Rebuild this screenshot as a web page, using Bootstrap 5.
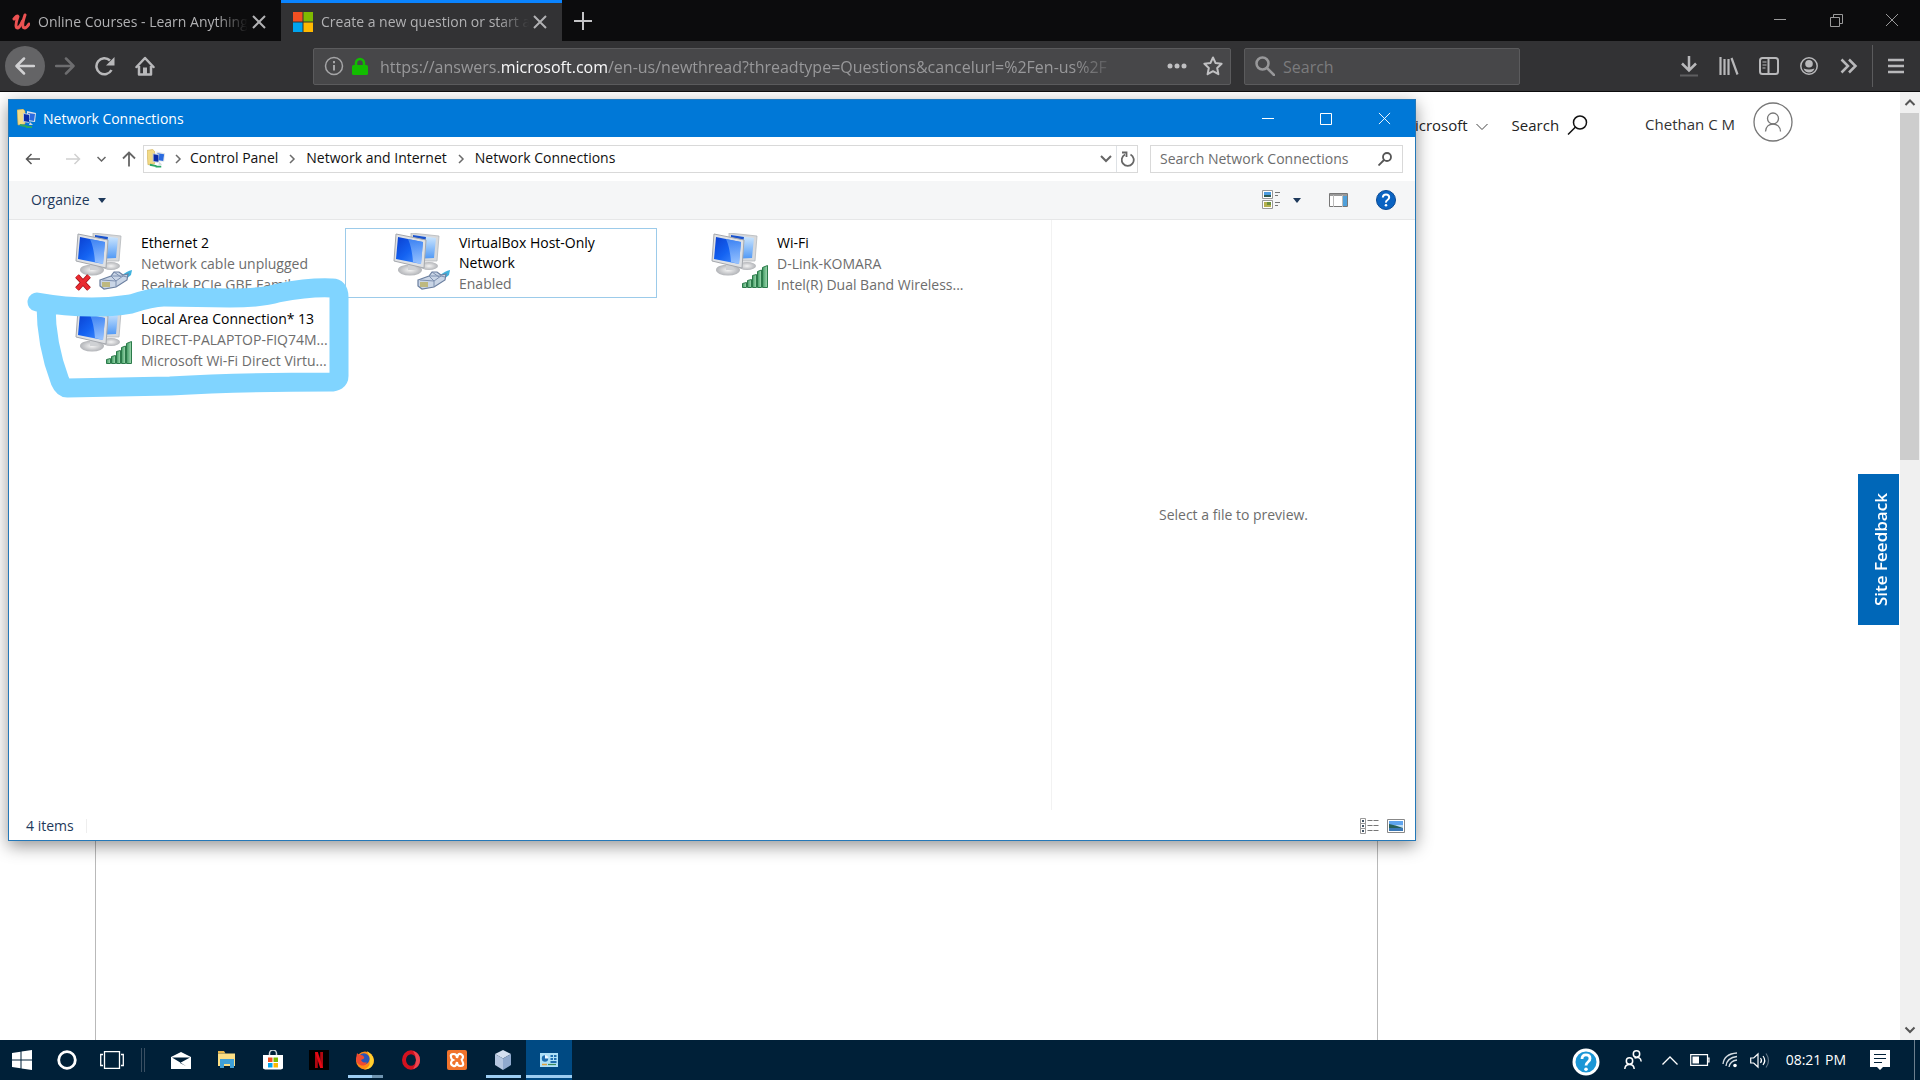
<!DOCTYPE html>
<html lang="en">
<head>
<meta charset="utf-8">
<meta name="viewport" content="width=device-width, initial-scale=1">
<title>Network Connections</title>
<link href="https://cdn.jsdelivr.net/npm/bootstrap@5.3.0/dist/css/bootstrap.min.css" rel="stylesheet">
<style>
:root { --ui: "Open Sans", "Noto Sans", sans-serif; }
body { font-family: var(--ui); font-size: 14px; line-height: 20px; color: #000; height: 100vh; overflow: hidden; background: #fff; }
svg { display: block; flex: none; }
button, .plain { border: 0; background: none; padding: 0; color: inherit; display: flex; align-items: center; justify-content: center; text-decoration: none; flex: none; }
input { font-family: var(--ui); }

/* browser chrome */
.tabstrip { height: 41px; background: #0c0c0d; color: #b1b1b3; }
.tab-item { width: 281px; padding: 2px 15px 0 12px; font-size: 14px; }
.tab-item.current { background: #323234; border-top: 3px solid #0a84ff; padding-top: 0; padding-bottom: 1px; }
.tab-title { overflow: hidden; white-space: nowrap; -webkit-mask-image: linear-gradient(90deg, #000 85%, transparent); mask-image: linear-gradient(90deg, #000 85%, transparent); }
.win-btn { width: 56px; height: 40px; color: #9a9a9a; }
.toolbar { height: 51px; background: #323234; border-bottom: 1px solid #0c0c0d; color: #b8b8ba; padding-left: 5px; }
.tool { width: 40px; height: 40px; }
.tool.back { background: #646466; border-radius: 50%; color: #d0d0d2; }
.tool.off { color: #6d6d6f; }
.field { height: 37px; background: #474749; border: 1px solid #5b5b5d; border-radius: 2px; }
.url-field { flex: 0 1 918px; margin-left: 148px; padding: 0 7px 0 10px; }
.url-text { font-size: 16px; color: #98989a; white-space: nowrap; overflow: hidden; width: 750px; outline: 0; padding-top: 2px; -webkit-mask-image: linear-gradient(90deg, #000 93%, transparent 99%); mask-image: linear-gradient(90deg, #000 93%, transparent 99%); }
.url-text b { font-weight: 400; color: #f9f9fa; }
.find-field { flex: 0 1 276px; margin-left: 13px; padding: 0 10px; }
.find-field input { background: none; border: 0; outline: 0; font-size: 16px; min-width: 0; color: #ddd; padding: 2px 0 0; }
.find-field input::placeholder { color: #7b7b7d; opacity: 1; }
.menu-sep { width: 1px; height: 42px; background: #5b5b5d; margin: 0 3px; }

/* web page */
.site { background: #fff; overflow: hidden; padding-top: 66px; }
.site-col { margin: 0 542px 0 95px; border: 1px solid #b9b9b9; border-width: 0 1px; height: 100%; }
.site-head { top: 0; right: 127px; height: 66px; color: #222; font-size: 15px; }
.site-head .who { color: #333; padding-bottom: 2px; margin-left: 57px; }
.avatar { margin: 0 0 6px 18px; }
.feedback { right: 21px; top: 382px; width: 41px; height: 151px; padding-right: 4px; background: #0067b8; color: #fff; font-size: 17px; font-weight: 600; writing-mode: vertical-rl; transform: rotate(180deg); }
.scroller { right: 0; top: 0; bottom: 0; width: 20px; background: #f0f0f0; }
.scroller .thumb { height: 347px; background: #cdcdcd; margin-right: 1px; }

/* explorer window */
.explorer { left: 8px; top: 7px; width: calc(75% - 32px); height: 742px; z-index: 2; background: #fff; border: 1px solid #2478b8; box-shadow: 0 5px 16px rgba(0,0,0,.42); }
.titlebar { height: 37px; background: #0078d7; color: #fff; padding: 0 2px 0 8px; }
.titlebar button { width: 58px; height: 36px; }
.titlebar .caption { margin-left: 6px; }
.address { height: 44px; padding: 0 12px; color: #666; }
.box { height: 28px; border: 1px solid #d9d9d9; background: #fff; }
.crumbs { margin-left: 7px; padding-left: 3px; }
.crumbs a { color: #111; text-decoration: none; padding-bottom: 2px; }
.lookup { width: 253px; margin-left: 12px; padding: 0 10px 0 9px; }
.lookup input { border: 0; outline: 0; min-width: 0; padding: 0; color: #444; }
.lookup input::placeholder { color: #6d6d6d; opacity: 1; }
.cmdbar { height: 39px; background: #f5f6f7; border-bottom: 1px solid #e6e7e8; color: #1e395b; padding: 0 19px 0 22px; }
.items { display: grid; grid-template-columns: repeat(3, 312px); grid-auto-rows: 70px; gap: 6px; padding: 8px 0 0 18px; align-content: start; }
.conn { border: 1px solid transparent; padding: 4px 0 0 47px; color: #6d6d6d; line-height: 21px; text-align: left; align-items: flex-start; justify-content: flex-start; }
.conn.focused { border-color: #9ccbea; }
.conn .txt { width: 190px; margin: -1px 0 0 8px; display: block; }
.conn .txt span { display: block; white-space: nowrap; }
.conn .txt .nm { color: #000; }
.conn .txt .wrapped { white-space: normal; line-height: 20px; padding-top: 1px; }
.preview { width: 364px; border-left: 1px solid #f2f2f2; color: #6d6d6d; }
.status { height: 30px; padding: 2px 10px 0 17px; color: #1e395b; }
.status .bar { width: 1px; height: 14px; background: #eee; margin-left: 12px; }
.marker { left: 26px; top: 186px; z-index: 3; pointer-events: none; }

/* taskbar */
.taskbar { height: 40px; background: #002038; color: #fff; }
.task { width: 46px; height: 40px; position: relative; }
.task.sys { width: 45px; }
.task.sys:first-child { width: 44px; }
.task.open::after { content: ""; position: absolute; left: 6px; right: 5px; bottom: 2px; height: 3px; background: #9ccdf2; }
.task.multi::after { background: linear-gradient(90deg, #9ccdf2 24px, #6f94b0 24px); }
.task.active { background: #004a83; }
.task.active::after { left: 0; right: 0; }
.split { width: 4px; height: 24px; border: 1px solid #3a4f62; border-width: 0 1px; margin: 0 13px 0 7px; }
.peek { width: 6px; height: 40px; border-left: 1px solid #6c7f8e; }
</style>
<script src="https://cdn.jsdelivr.net/npm/bootstrap@5.3.0/dist/js/bootstrap.bundle.min.js"></script>
</head>
<body class="d-flex flex-column">

<svg width="0" height="0" class="position-absolute" aria-hidden="true">
  <defs>
    <linearGradient id="scr" x1="0" y1="0" x2="1" y2="1"><stop offset="0" stop-color="#0a3fd0"/><stop offset=".5" stop-color="#1463f2"/><stop offset="1" stop-color="#4d95ff"/></linearGradient>
    <linearGradient id="glare" x1="0" y1="0" x2="0" y2="1"><stop offset="0" stop-color="#4f92f6"/><stop offset="1" stop-color="#b4d5ff"/></linearGradient>
    <linearGradient id="scr2" x1="0" y1="0" x2="0" y2="1"><stop offset="0" stop-color="#d4ebff"/><stop offset="1" stop-color="#4f98f5"/></linearGradient>
    <linearGradient id="bars" x1="0" y1="0" x2="1" y2="0"><stop offset="0" stop-color="#3f9a62"/><stop offset="1" stop-color="#a4dcb4"/></linearGradient>
    <radialGradient id="base"><stop offset="0" stop-color="#f4f4f4"/><stop offset="1" stop-color="#b2b4b8"/></radialGradient>
    <symbol id="pcs" viewBox="0 0 50 44">
      <ellipse cx="36" cy="33" rx="9" ry="4" fill="url(#base)"/>
      <path d="M18 0 46 3 44 28 18 28z" fill="#d7d9dc" stroke="#b4b7bb" stroke-width=".8"/>
      <path d="M20 2 43 5 41 25 20 26z" fill="url(#scr2)"/>
      <path d="M20 2 33 4 32 10 20 9z" fill="#1a52cc"/>
      <ellipse cx="17" cy="37" rx="12" ry="5.500" fill="url(#base)"/>
      <path d="M15 29h7l1 8h-8z" fill="#cfd1d4"/>
      <path d="M3 1 33 7 31 35 1 28z" fill="#dfe1e4" stroke="#a5a8ad"/>
      <path d="M5 4 30 9 28 31 3 26z" fill="url(#scr)"/>
      <path d="M15 6 30 9 28 31 20 29Q19 15 15 6z" fill="url(#glare)" opacity=".75"/>
    </symbol>
    <symbol id="plug" viewBox="0 0 34 21">
      <path d="M22 7Q28 2 33 1L32 6 27 10z" fill="#3fb2de"/>
      <path d="M1 11 12 7 15 3 20 3 24 6 29 5 28 11 17 18 5 20 1 17z" fill="#c9d5e6" stroke="#6b7f9f" stroke-width="1.200"/>
      <path d="M12 7 24 7 28 8M12 7 17 12 17 18M3 11 17 12 24 7M15 3 22 8" fill="none" stroke="#7d90b0"/>
      <path d="M4 13v5M6 13v5M8 13v5M10 13v5" stroke="#b6a63c" stroke-width="1.200"/>
    </symbol>
    <symbol id="signal" viewBox="0 0 26 23">
      <g fill="url(#bars)" stroke="#2b7a4a" stroke-width="1"><path d="M.5 22.500v-4l4-1v5z"/><path d="M5.500 22.500v-7l4-1v8z"/><path d="M10.500 22.500v-12l4-1v13z"/><path d="M15.500 22.500v-16l4-1.500v17.500z"/><path d="M20.500 22.500V2.500l5-2v22z"/></g>
    </symbol>
    <symbol id="netfolder" viewBox="0 0 20 20">
      <path d="M0 1 6 0 8 2 8 15 1 16z" fill="#f2da86" stroke="#c9a94a" stroke-width=".6"/>
      <path d="M10 2 19 4 18 13 10 12z" fill="#dfe3e8"/><path d="M11 4 18 5 17 12 11 11z" fill="#2b6be0"/>
      <path d="M6 4 13 5 12 14 6 13z" fill="#b8c6dc"/><path d="M7 5 12 6 12 13 7 12z" fill="#0c2ca8"/>
      <path d="M13 13l3 3h-4z" fill="#cfd6de"/>
      <path d="M3 16l7 1.500M9 18h6" stroke="#2aa564" stroke-width="2"/>
    </symbol>
    <symbol id="chev" viewBox="0 0 8 10"><path d="M2 1l4 4-4 4" fill="none" stroke="#6b6b6b" stroke-width="1.500"/></symbol>
    <symbol id="cross" viewBox="0 0 14 14"><path d="M1 1l12 12M13 1L1 13" fill="none" stroke="currentColor" stroke-width="inherit"/></symbol>
  </defs>
</svg>

<header>
  <div class="tabstrip d-flex">
    <div class="tab-item d-flex align-items-center">
      <svg width="18" height="18" viewBox="0 0 18 18" fill="none" stroke="#ec5252" stroke-linecap="round" stroke-linejoin="round"><path d="M2 6Q5 2 6 3.500Q3 12 4.500 14.500Q7 16.500 10.500 8" stroke-width="3"/><path d="M13 2Q9.500 12 11.500 14.500Q14 16 17 11" stroke-width="3"/></svg>
      <span class="tab-title flex-grow-1 ms-2">Online Courses - Learn Anything</span>
      <button aria-label="Close tab" class="ms-1"><svg width="14" height="14" stroke-width="2"><use href="#cross"/></svg></button>
    </div>
    <div class="tab-item current d-flex align-items-center">
      <svg width="20" height="20" viewBox="0 0 20 20"><path fill="#f25022" d="M0 0h9.500v9.500H0z"/><path fill="#7fba00" d="M10.500 0H20v9.500h-9.500z"/><path fill="#00a4ef" d="M0 10.500h9.500V20H0z"/><path fill="#ffb900" d="M10.500 10.500H20V20h-9.500z"/></svg>
      <span class="tab-title flex-grow-1 ms-2">Create a new question or start a</span>
      <button aria-label="Close tab" class="ms-1"><svg width="14" height="14" stroke-width="2"><use href="#cross"/></svg></button>
    </div>
    <button class="ms-2 px-1" aria-label="New tab"><svg width="18" height="18" viewBox="0 0 18 18" stroke="#c4c4c6" stroke-width="2"><path d="M9 0v18M0 9h18"/></svg></button>
    <div class="d-flex ms-auto">
      <button class="win-btn" aria-label="Minimize"><svg width="12" height="12" stroke="currentColor"><path d="M0 5.500h12"/></svg></button>
      <button class="win-btn" aria-label="Restore"><svg width="13" height="13" fill="none" stroke="currentColor"><path d="M.5 3.500h9v9h-9zM3.500 3.500v-3h9v9h-3"/></svg></button>
      <button class="win-btn" aria-label="Close"><svg width="14" height="14" stroke-width="1"><use href="#cross"/></svg></button>
    </div>
  </div>

  <nav class="toolbar d-flex align-items-center" aria-label="Browser toolbar">
    <button class="tool back" aria-label="Back"><svg width="20" height="20" viewBox="0 0 20 20" fill="none" stroke="currentColor" stroke-width="2.500" stroke-linecap="round" stroke-linejoin="round"><path d="M19 10H2M9 2.500 1.500 10 9 17.500"/></svg></button>
    <button class="tool off" aria-label="Forward"><svg width="20" height="20" viewBox="0 0 20 20" fill="none" stroke="currentColor" stroke-width="2.500" stroke-linecap="round" stroke-linejoin="round"><path d="M1 10h17M11 2.500 18.500 10 11 17.500"/></svg></button>
    <button class="tool" aria-label="Reload"><svg width="20" height="20" viewBox="0 0 20 20" fill="none" stroke="currentColor" stroke-width="2.500"><path d="M16.500 14A8 8 0 1 1 15 4.500"/><path d="M19.500 1v8.500H11z" fill="currentColor" stroke="none"/></svg></button>
    <button class="tool" aria-label="Home"><svg width="20" height="20" viewBox="0 0 20 20" fill="none" stroke="currentColor" stroke-width="2.500" stroke-linejoin="round" stroke-linecap="round"><path d="M1.500 11 10 2l8.500 9M4 10v8.500h12V10"/><path d="M10 18v-6.500" stroke-width="4" stroke-linecap="butt"/></svg></button>
    <div class="field url-field d-flex align-items-center">
      <svg width="20" height="20" viewBox="0 0 20 20" fill="none" stroke="#a5a5a7" stroke-width="1.500"><circle cx="10" cy="10" r="8.500"/><path d="M10 9v5.500M10 5v2.200" stroke-width="2"/></svg>
      <svg class="ms-2" width="16" height="18" viewBox="0 0 16 18"><path d="M4 9V6a4 4 0 0 1 8 0v3" fill="none" stroke="#12bc00" stroke-width="2.500"/><rect y="8" width="16" height="10" rx="1.500" fill="#12bc00"/></svg>
      <div class="url-text ms-2 ps-1" role="textbox" aria-label="Address" contenteditable="true" spellcheck="false">https://answers.<b>microsoft.com</b>/en-us/newthread?threadtype=Questions&amp;cancelurl=%2Fen-us%2F</div>
      <button class="ms-auto" aria-label="Page actions"><svg width="20" height="6" fill="#c0c0c2"><circle cx="3" cy="3" r="2.500"/><circle cx="10" cy="3" r="2.500"/><circle cx="17" cy="3" r="2.500"/></svg></button>
      <button class="ms-3" aria-label="Bookmark"><svg width="20" height="20" viewBox="0 0 20 20" fill="none" stroke="#c0c0c2" stroke-width="2" stroke-linejoin="round"><path d="M10 1.500l2.600 5.600 6 .7-4.400 4.200 1.200 6.200L10 15.200l-5.400 3L5.800 12 1.400 7.800l6-.7z"/></svg></button>
    </div>
    <div class="field find-field d-flex align-items-center">
      <svg width="20" height="20" viewBox="0 0 20 20" fill="none" stroke="#98989a" stroke-width="2.500" stroke-linecap="round"><circle cx="7.500" cy="7.500" r="6"/><path d="M12 12l7 7"/></svg>
      <input class="ms-2 flex-grow-1" type="text" aria-label="Search the web" placeholder="Search">
    </div>
    <div class="d-flex align-items-center ms-auto">
      <button class="tool" aria-label="Downloads"><svg width="18" height="22" viewBox="0 0 18 22" fill="none" stroke="currentColor" stroke-width="2.500"><path d="M9 1v14M2 8.500 9 15.500l7-7"/><path d="M0 20.500h18" stroke="#5e5e60" stroke-width="2"/></svg></button>
      <button class="tool" aria-label="Library"><svg width="20" height="18" viewBox="0 0 20 18" fill="none" stroke="currentColor" stroke-width="2.200"><path d="M1.500 0v18M5.500 2v16M9.500 2v16M12.500 1 18.500 17.500"/></svg></button>
      <button class="tool" aria-label="Sidebars"><svg width="20" height="18" viewBox="0 0 20 18" fill="none" stroke="currentColor" stroke-width="2"><rect x="1" y="1" width="18" height="16" rx="2.500"/><path d="M9.500 1v16"/><path d="M3.500 5h4M3.500 8h4M3.500 11h3" stroke-width="1.200"/></svg></button>
      <button class="tool" aria-label="Account"><svg width="18" height="18" viewBox="0 0 18 18"><circle cx="9" cy="9" r="8.200" fill="none" stroke="currentColor" stroke-width="1.500"/><circle cx="9" cy="6.800" r="3.800" fill="currentColor"/><path d="M3.500 11.500Q9 13.500 14.500 11.500 13 15.500 9 15.500T3.500 11.500z" fill="currentColor"/></svg></button>
      <button class="tool" aria-label="More tools"><svg width="18" height="16" viewBox="0 0 18 16" fill="none" stroke="currentColor" stroke-width="2.500"><path d="M1.500 1.500 8 8l-6.500 6.500M9 1.500 15.500 8 9 14.500"/></svg></button>
      <span class="menu-sep"></span>
      <button class="tool" aria-label="Menu"><svg width="16" height="16" stroke="currentColor" stroke-width="2.500"><path d="M0 2h16M0 8h16M0 14h16"/></svg></button>
      <span class="ps-1"></span>
    </div>
  </nav>
</header>

<main class="site flex-grow-1 position-relative">
  <div class="site-col"></div>

  <div class="site-head position-absolute d-flex align-items-center">
    <a href="#" class="plain">All Microsoft <svg class="ms-2 mt-1" width="12" height="8" fill="none" stroke="#444"><path d="M.5 1l5.500 5.500L11.500 1"/></svg></a>
    <a href="#" class="plain ps-2 ms-3">Search <svg class="ms-2" width="21" height="20" viewBox="0 0 21 20" fill="none" stroke="#111" stroke-width="1.500"><circle cx="13" cy="7.500" r="6.500"/><path d="M8.500 12 1 19.500"/></svg></a>
    <a href="#" class="plain who">Chethan C M</a>
    <a href="#" class="plain avatar" aria-label="Account"><svg width="40" height="40" viewBox="0 0 40 40" fill="none" stroke="#777" stroke-width="1.300"><circle cx="20" cy="20" r="19"/><circle cx="20" cy="16.500" r="5.500"/><path d="M12.500 29.500C12.500 19.500 27.500 19.500 27.500 29.500"/></svg></a>
  </div>

  <section class="explorer position-absolute d-flex flex-column" aria-label="Network Connections window">
    <div class="titlebar d-flex align-items-center">
      <svg width="20" height="20"><use href="#netfolder"/></svg>
      <span class="caption">Network Connections</span>
      <div class="d-flex ms-auto">
        <button aria-label="Minimize"><svg width="12" height="12" stroke="#fff"><path d="M0 5.500h12"/></svg></button>
        <button aria-label="Maximize"><svg width="12" height="12" fill="none" stroke="#fff"><path d="M.5.5h11v11H.5z"/></svg></button>
        <button aria-label="Close"><svg width="13" height="13" stroke-width="1"><use href="#cross"/></svg></button>
      </div>
    </div>

    <div class="address d-flex align-items-center">
      <button aria-label="Back" class="ms-1 me-1"><svg width="16" height="12" fill="none" stroke="#555" stroke-width="1.500"><path d="M15 6H1.500M6.500 1l-5 5 5 5"/></svg></button>
      <button aria-label="Forward" class="ms-3 me-3 ps-1"><svg width="16" height="12" fill="none" stroke="#d0d0d0" stroke-width="1.500"><path d="M1 6h13.500M9.500 1l5 5-5 5"/></svg></button>
      <button aria-label="Recent locations"><svg width="9" height="7" fill="none" stroke="#666" stroke-width="1.500"><path d="M.5 1l4 4 4-4"/></svg></button>
      <button aria-label="Up" class="ms-3"><svg width="14" height="16" fill="none" stroke="#666" stroke-width="1.800"><path d="M7 15.500V1.500M1 7.500l6-6 6 6"/></svg></button>
      <div class="box crumbs d-flex align-items-center flex-grow-1">
        <svg width="19" height="20"><use href="#netfolder"/></svg>
        <svg class="ms-2" width="8" height="10"><use href="#chev"/></svg>
        <a class="ms-2" href="#">Control Panel</a><svg class="ms-2 me-2" width="12" height="10"><use href="#chev"/></svg>
        <a href="#">Network and Internet</a><svg class="ms-2 me-2" width="12" height="10"><use href="#chev"/></svg>
        <a href="#">Network Connections</a>
        <button class="ms-auto me-1" aria-label="Previous locations"><svg width="12" height="8" fill="none" stroke="#666" stroke-width="2"><path d="M1 1l5 5 5-5"/></svg></button>
        <button class="h-100 border-start ps-1" aria-label="Refresh"><svg width="16" height="16" viewBox="0 0 16 16" fill="none" stroke="#666" stroke-width="1.800"><path d="M9.500 3.500A6 6 0 1 1 4 3.500"/><path d="M1 1.500h4.500V6"/></svg></button>
      </div>
      <div class="box lookup d-flex align-items-center">
        <input class="flex-grow-1" type="text" aria-label="Search Network Connections" placeholder="Search Network Connections">
        <svg width="14" height="14" viewBox="0 0 14 14" fill="none" stroke="#555" stroke-width="1.800"><circle cx="9" cy="5" r="4"/><path d="M6 8 .5 13.500"/></svg>
      </div>
    </div>

    <div class="cmdbar d-flex align-items-center">
      <button>Organize <svg class="ms-2" width="8" height="5" fill="#1e395b"><path d="M0 0h8L4 5z"/></svg></button>
      <div class="d-flex align-items-center ms-auto">
        <button aria-label="Change view"><svg width="19" height="20" viewBox="0 0 19 20" fill="none" stroke="#999"><path d="M.5.5h10v8H.5zM.5 10.500h10v8H.5z" fill="#fff"/><path fill="#4b9be0" stroke="none" d="M2 2h7v3H2z"/><path fill="#2d5a52" stroke="none" d="M2 5h7v2H2z"/><path fill="#b5b04e" stroke="none" d="M2 12h7v5H2z"/><path fill="#6b8f3c" stroke="none" d="M5 12h4v3H5z"/><path stroke="#777" d="M13 2.500h5M13 5.500h3M13 12.500h5M13 15.500h3"/></svg></button>
        <button class="ms-2 px-1" aria-label="View menu"><svg width="8" height="5" fill="#1e395b"><path d="M0 0h8L4 5z"/></svg></button>
        <button class="ms-4" aria-label="Preview pane"><svg width="19" height="14" viewBox="0 0 19 14"><path d="M.5.500h18v13H.5z" fill="#fff" stroke="#777"/><path d="M1 2h17" stroke="#999" stroke-width="2"/><path d="M4.500 2v12M13.500 2v12" stroke="#bbb"/><path fill="#4fa0da" d="M14 3h4v10h-4z"/></svg></button>
        <button class="ms-4 ps-1" aria-label="Help"><svg width="20" height="20" viewBox="0 0 20 20"><circle cx="10" cy="10" r="9.500" fill="#0a63c2" stroke="#0b4a94"/><path d="M6.800 7.500Q7 4.500 10 4.500T13.200 7.300Q13.200 9 11.500 10T10 12.700" fill="none" stroke="#fff" stroke-width="2"/><circle cx="10" cy="15.300" r="1.300" fill="#fff"/></svg></button>
      </div>
    </div>

    <div class="d-flex flex-grow-1">
      <div class="items flex-grow-1">
        <button class="conn">
          <svg width="58" height="58" viewBox="0 0 58 58"><use href="#pcs" width="50" height="44"/><use href="#plug" x="24" y="36" width="34" height="21"/><path d="M2 43l12 13M14 43 2 56" stroke="#a01218" stroke-width="5"/><path d="M2 43l12 13M14 43 2 56" stroke="#ea2a2f" stroke-width="3.500"/></svg>
          <span class="txt"><span class="nm">Ethernet 2</span><span>Network cable unplugged</span><span>Realtek PCIe GBE Family C...</span></span>
        </button>
        <button class="conn focused">
          <svg width="58" height="58" viewBox="0 0 58 58"><use href="#pcs" width="50" height="44"/><use href="#plug" x="24" y="36" width="34" height="21"/></svg>
          <span class="txt"><span class="nm wrapped">VirtualBox Host-Only Network</span><span>Enabled</span></span>
        </button>
        <button class="conn">
          <svg width="58" height="58" viewBox="0 0 58 58"><use href="#pcs" width="50" height="44"/><use href="#signal" x="31" y="32" width="26" height="23"/></svg>
          <span class="txt"><span class="nm">Wi-Fi</span><span>D-Link-KOMARA</span><span>Intel(R) Dual Band Wireless...</span></span>
        </button>
        <button class="conn">
          <svg width="58" height="58" viewBox="0 0 58 58"><use href="#pcs" width="50" height="44"/><use href="#signal" x="31" y="32" width="26" height="23"/></svg>
          <span class="txt"><span class="nm">Local Area Connection* 13</span><span>DIRECT-PALAPTOP-FIQ74M...</span><span>Microsoft Wi-Fi Direct Virtu...</span></span>
        </button>
      </div>
      <aside class="preview d-flex align-items-center justify-content-center">Select a file to preview.</aside>
    </div>

    <div class="status d-flex align-items-center">
      <span>4 items</span><span class="bar"></span>
      <div class="d-flex align-items-center ms-auto gap-2">
        <button aria-label="Details view"><svg width="19" height="16" viewBox="0 0 19 16" fill="none" stroke="#999"><path d="M.5.5h5v5h-5zM.5 5.500h5v5h-5zM.5 10.500h5v5h-5z" fill="#fff"/><path stroke="#456" stroke-width="2" d="M2 3h2M2 8h2M2 13h2"/><path stroke="#777" d="M7.500 2.500h5M13.500 2.500h5M7.500 7.500h5M13.500 7.500h5M7.500 12.500h5M13.500 12.500h5"/></svg></button>
        <button aria-label="Large icons view"><svg width="18" height="14" viewBox="0 0 18 14"><path d="M.5.5h17v13H.5z" fill="#fff" stroke="#888"/><path fill="#5fa4ee" d="M2 2h14v5H2z"/><path fill="#bcdcf5" d="M2 6h14v3H2z"/><path fill="#275f58" d="M2 5Q8 6 16 9H2z"/><path fill="#3b78b5" d="M2 9h14v3H2z"/></svg></button>
      </div>
    </div>
  </section>

  <svg class="marker position-absolute" width="326" height="124" viewBox="26 278 326 124" fill="none" aria-hidden="true">
    <path d="M37 302Q88 311 131 304Q152 297 164 297L230 298Q262 298 278 293Q310 287 331 288Q339 287 339 297V376Q339 382 330 382Q240 382 170 386L67 388Q63 388 60 381Q46 344 46 305" stroke="#80d4ff" stroke-width="19" stroke-linejoin="round" stroke-linecap="round"/>
  </svg>

  <a href="#" class="feedback plain position-absolute">Site Feedback</a>
  <div class="scroller position-absolute d-flex flex-column" aria-hidden="true">
    <svg class="my-1 mx-1" width="12" height="13" fill="none" stroke="#555" stroke-width="2"><path d="M1.500 9 6 4.500 10.500 9"/></svg>
    <div class="thumb"></div>
    <svg class="mt-auto mb-1 mx-1" width="12" height="12" fill="none" stroke="#555" stroke-width="2"><path d="M1.500 3.500 6 8l4.500-4.500"/></svg>
  </div>
</main>

<footer class="taskbar d-flex align-items-center">
  <button class="task sys" aria-label="Start"><svg width="20" height="20" viewBox="0 0 20 20" fill="#fff"><path d="M0 3 8.500 1.800V9.500H0zM9.500 1.600 20 0v9.500H9.500zM0 10.500h8.500v7.800L0 17zM9.500 10.500H20V20L9.500 18.400z"/></svg></button>
  <button class="task sys" aria-label="Cortana"><svg width="20" height="20" fill="none" stroke="#fff" stroke-width="2.800"><circle cx="10" cy="10" r="8.300"/></svg></button>
  <button class="task sys" aria-label="Task view"><svg width="24" height="18" viewBox="0 0 24 18" fill="none" stroke="#fff" stroke-width="1.300"><path d="M4.500.700h15v16.600h-15zM3 3.500H.7v11H3M21 3.500h2.300v11H21"/></svg></button>
  <span class="split"></span>
  <button class="task" aria-label="Mail"><svg width="20" height="17" viewBox="0 0 20 17"><path fill="#fff" d="M0 5 10 0l10 5v12H0z"/><path d="M1 5.500h18L9 11l6 3z" fill="#002038"/></svg></button>
  <button class="task" aria-label="File Explorer"><svg width="20" height="18" viewBox="0 0 20 18"><path fill="#e9b84c" d="M1 0h6l1.500 2.500H1z"/><path fill="#fbdf85" d="M1 2.500h17V15H1z"/><path fill="#3fa0d8" d="M3 8h14v9h-4v-4H7v4H3z"/></svg></button>
  <button class="task" aria-label="Store"><svg width="20" height="20" viewBox="0 0 20 20"><path d="M6.500 6V3.500a3.500 3.500 0 0 1 7 0V6" fill="none" stroke="#ccd4da" stroke-width="1.500"/><path fill="#fff" d="M0 5h20v13.500l-2 1H2l-2-1z"/><path fill="#f25022" d="M5 7.500h4.500V12H5z"/><path fill="#7fba00" d="M10.500 7.500H15V12h-4.500z"/><path fill="#00a4ef" d="M5 13h4.500v4.500H5z"/><path fill="#ffb900" d="M10.500 13H15v4.500h-4.500z"/></svg></button>
  <button class="task" aria-label="Netflix"><svg width="20" height="20" viewBox="0 0 20 20"><path d="M0 0h20v20H0z"/><path fill="#b00710" d="M6 2h2.800v16H6zM11.200 2H14v16h-2.800z"/><path fill="#e50914" d="M6 2h2.800L14 18h-2.800z"/></svg></button>
  <button class="task open multi" aria-label="Firefox"><svg width="20" height="20" viewBox="0 0 20 20"><circle cx="10" cy="10.500" r="9" fill="#ff8a16"/><path fill="#ffd02e" d="M12 1Q20 6 18.500 13 16 20 9 19.500 16 17 14.500 11 15 6 12 1z"/><circle cx="8.800" cy="9" r="5.800" fill="#2a55b8"/><path fill="#f04a32" d="M2 3Q3 5 6 5 10 6 9 8.500L6 10Q7 13 12 12.500 10 17 5 15 1 13 1 9z"/></svg></button>
  <button class="task" aria-label="Opera"><svg width="20" height="20"><ellipse cx="10" cy="10" rx="7" ry="7.800" fill="none" stroke="#d3121f" stroke-width="4"/><path d="M12 1Q19 3 19 10T12 19Q15 15 15 10T12 1z" fill="#ec4550"/></svg></button>
  <button class="task" aria-label="XAMPP"><svg width="20" height="20" viewBox="0 0 20 20"><rect width="20" height="20" rx="2" fill="#f0732c"/><path d="M10 8Q10 4 6.500 4T4 7Q4 9 6 10 4 11 4 13T6.500 16 10 12Q10 16 13.500 16T16 13 14 10Q16 9 16 7T13.500 4 10 8z" fill="none" stroke="#fff" stroke-width="2.200"/></svg></button>
  <button class="task open" aria-label="VirtualBox"><svg width="18" height="20" viewBox="0 0 18 20"><path fill="#d3dff0" d="M9 0l8 4-8 4.500L1 4z"/><path fill="#b4c6e0" d="M1 4l8 4.500V20l-8-5z"/><path fill="#8fa9ce" d="M17 4 9 8.500V20l8-5z"/></svg></button>
  <button class="task active open" aria-label="Control Panel"><svg width="18" height="14" viewBox="0 0 18 14"><path fill="#ace0f7" d="M0 0h18v14H0z"/><circle cx="5" cy="5.500" r="3.200" fill="#1d6dae"/><path d="M5 5.500V2A3.500 3.500 0 0 1 8.500 5.500z" fill="#eef8ff"/><path d="M10.500 3h2.500M14 3h2.500M10.500 6h2.500M14 6h2.500M10.500 9h6" stroke="#1d6dae" stroke-width="1.800"/><path d="M2 11.500h5" stroke="#e0a23c" stroke-width="1.500"/><path d="M8 11.500h8" stroke="#3a8a5a" stroke-width="1.200"/></svg></button>

  <div class="d-flex align-items-center ms-auto">
    <button class="pt-1" aria-label="Get help"><svg width="28" height="28" viewBox="0 0 28 28"><circle cx="14" cy="14" r="12" fill="#1b96d6" stroke="#fff" stroke-width="3"/><path d="M10 11Q10 6.800 14 6.800T18 10.500Q18 12.500 16 14T14 17.500" fill="none" stroke="#fff" stroke-width="2.800"/><circle cx="14" cy="21.300" r="1.800" fill="#fff"/></svg></button>
    <button class="ms-4" aria-label="People"><svg width="18" height="20" viewBox="0 0 18 20" fill="none" stroke="#fff" stroke-width="1.500"><circle cx="12.500" cy="4" r="3.200"/><circle cx="5.500" cy="11" r="3.200"/><path d="M.8 19Q1 14.500 5.500 14.500T10.200 19M10.500 8Q16.500 6 17.200 11.500"/></svg></button>
    <button class="ms-3" aria-label="Show hidden icons"><svg class="ms-1" width="16" height="9" fill="none" stroke="#fff" stroke-width="1.300"><path d="M.5 8.500 8 1l7.500 7.500"/></svg></button>
    <button class="ms-2 ps-1" aria-label="Battery"><svg width="20" height="12" viewBox="0 0 20 12" fill="none" stroke="#fff"><path d="M.7.700h16.800v10.600H.7zM17.500 4h1.500v4h-1.500" stroke-width="1.200"/><path fill="#fff" stroke="none" d="M2.500 2.500h6.500v7H2.500z"/></svg></button>
    <button class="ms-2 ps-1" aria-label="Wi-Fi"><svg width="16" height="16" viewBox="0 0 16 16" fill="none" stroke="#d5dde3" stroke-width="1.300"><path d="M1 12Q2 2 15 1M4 14Q5 5.500 15 4.500M7 15Q8 9 15 8"/><circle cx="13" cy="13.500" r="1.800" fill="#fff" stroke="none"/></svg></button>
    <button class="ms-2 ps-1" aria-label="Volume"><svg width="20" height="17" viewBox="0 0 20 17" fill="none" stroke="#fff" stroke-width="1.200"><path d="M.7 6v5h3L8 15V2L3.700 6z"/><path d="M10.500 6q2 2.500 0 5M13 4q3.500 4.500 0 9"/><path d="M16 1.500q5 7 0 14" stroke="#5d7283"/></svg></button>
    <span class="ms-3">08:21 PM</span>
    <button class="ms-4" aria-label="Notifications"><svg width="20" height="20" viewBox="0 0 20 20"><path fill="#fff" d="M0 0h20v17h-7l-3 3-3-3H0z"/><path d="M4 4.500h12M4 8.500h12M4 12.500h8" stroke="#002038" stroke-width="1.200"/></svg></button>
    <span class="peek ms-4"></span>
  </div>
</footer>
</body>
</html>
